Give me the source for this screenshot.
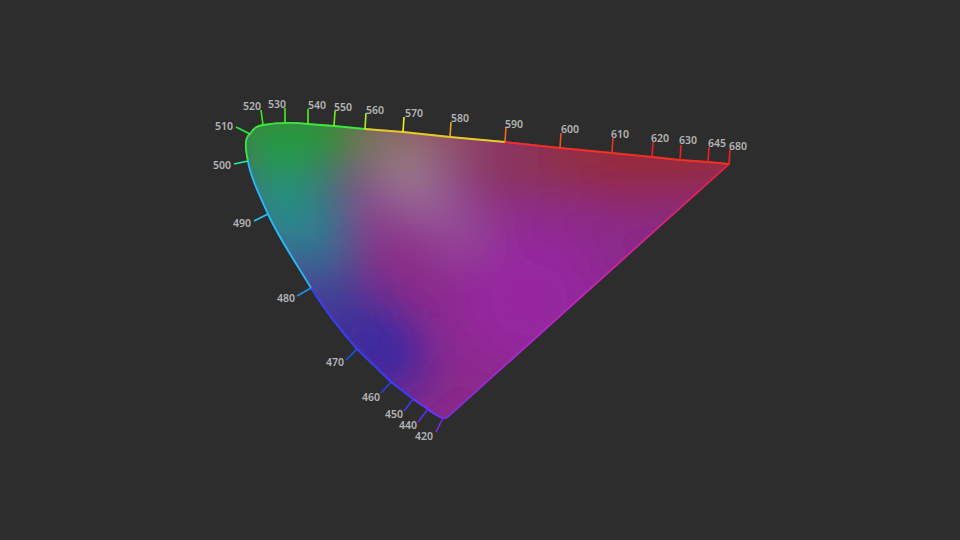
const pts: [string, number, number, number, number, string, number, number][] = [
  // label, x, y, tickX, tickY, color, labelX, labelY
  ['420', 443, 418, 436, 432, '#7a2cf0', 424, 437],
  ['440', 428, 409, 418, 422, '#5a30f0', 408, 426],
  ['450', 413, 399, 404, 411, '#4038f0', 394, 415],
  ['460', 391, 382, 381, 393, '#2a40f0', 371, 398],
  ['470', 357, 349, 346, 360, '#2050f0', 335, 363],
  ['480', 311, 288, 297, 296, '#2090f0', 286, 299],
  ['490', 268, 214, 254, 221, '#20c8f0', 242, 224],
  ['500', 248, 161, 234, 164, '#20f0a0', 222, 166],
  ['510', 250, 134, 236, 127, '#20f040', 224, 127],
  ['520', 263, 125, 261, 110, '#30f020', 252, 107],
  ['530', 285, 123, 285, 108, '#40f020', 277, 105],
  ['540', 308, 124, 308, 109, '#50f020', 317, 106],
  ['550', 334, 126, 335, 111, '#70f020', 343, 108],
  ['560', 365, 129, 366, 113, '#a8f020', 375, 111],
  ['570', 403, 132, 404, 117, '#f0f020', 414, 114],
  ['580', 450, 137, 451, 122, '#f0a020', 460, 119],
  ['590', 505, 142, 506, 127, '#f07020', 514, 125],
  ['600', 560, 148, 561, 133, '#f05020', 570, 130],
  ['610', 612, 153, 613, 138, '#f03020', 620, 135],
  ['620', 652, 157, 653, 142, '#f02020', 660, 139],
  ['630', 680, 160, 681, 145, '#f02020', 688, 141],
  ['645', 708, 162, 709, 147, '#f02020', 717, 144],
  ['680', 729, 164, 730, 149, '#f02020', 738, 147],
];

const outline =
  'M443,418 C436,415 430,411 428,409 L413,399 L391,382 L357,349 C340,330 325,310 311,288 C298,266 280,240 268,214 C258,192 250,175 248,161 C245,148 245,137 250,134 C254,127 258,126 263,125 C275,123 290,122 308,124 L334,126 L365,129 L403,132 L450,137 L505,142 L560,148 L612,153 L652,157 L680,160 L708,162 L729,164 L450,415 C447,418 445,419 443,418 Z';

export default function App() {
  return (
    <div className="w-[960px] h-[540px] bg-[#2d2d2d] overflow-hidden font-['Open_Sans','Noto_Sans',sans-serif]">
      <svg width="960" height="540" viewBox="0 0 960 540">
        <defs>
          <clipPath id="loc"><path d={outline} /></clipPath>
          <filter id="blur"><feGaussianBlur stdDeviation="28" /></filter>
          <linearGradient id="bottom" x1="443" y1="418" x2="729" y2="164" gradientUnits="userSpaceOnUse">
            <stop offset="0" stopColor="#8030f0" />
            <stop offset="0.5" stopColor="#d020c0" />
            <stop offset="1" stopColor="#f02040" />
          </linearGradient>
        </defs>
        <g clipPath="url(#loc)">
          <rect x="200" y="100" width="560" height="340" fill="#8a2a88" />
          <g filter="url(#blur)">
            <rect x="540" y="110" width="220" height="80" fill="#962a32" />
            <rect x="470" y="140" width="100" height="50" fill="#8a3848" />
            <circle cx="530" cy="300" r="75" fill="#9628a0" />
            <rect x="220" y="90" width="140" height="80" fill="#20a020" />
            <circle cx="280" cy="170" r="40" fill="#209a50" />
            <circle cx="395" cy="135" r="25" fill="#8a9a30" />
            <circle cx="450" cy="130" r="22" fill="#9a7830" />
            <rect x="230" y="190" width="120" height="70" fill="#208c90" />
            <circle cx="320" cy="290" r="30" fill="#204a98" />
            <circle cx="385" cy="355" r="40" fill="#2828a8" />
            <circle cx="345" cy="325" r="30" fill="#2830a0" />
            <circle cx="410" cy="185" r="30" fill="#a0989a" />
            <circle cx="455" cy="225" r="22" fill="#a070a8" />
          </g>
        </g>
        <path d={outline} fill="none" stroke="url(#bottom)" strokeWidth="1.6" />
        <path d="M248,161 C245,148 245,137 250,134 C254,127 258,126 263,125 C275,123 290,122 308,124 L334,126 L365,129" fill="none" stroke="#30f030" strokeWidth="1.8" />
        <path d="M365,129 L403,132 L450,137 L505,142" fill="none" stroke="#e0d020" strokeWidth="1.8" />
        <path d="M505,142 L560,148 L612,153 L652,157 L680,160 L708,162 L729,164" fill="none" stroke="#f03020" strokeWidth="1.8" />
        <path d="M311,288 C298,266 280,240 268,214 C258,192 250,175 248,161" fill="none" stroke="#20c0f0" strokeWidth="1.8" />
        <path d="M443,418 C436,415 430,411 428,409 L413,399 L391,382 L357,349 C340,330 325,310 311,288" fill="none" stroke="#3040f0" strokeWidth="1.8" />
        <path d="M443,418 C436,415 430,411 428,409 L413,399" fill="none" stroke="#7030f0" strokeWidth="1.8" />
        {pts.map((p) => (
          <g key={p[0]}>
            <line x1={p[1]} y1={p[2]} x2={p[3]} y2={p[4]} stroke={p[5]} strokeWidth="1.6" />
            <text x={p[6]} y={p[7]} fill="#b4b4b4" fontSize="10.5" fontWeight="600" textAnchor="middle" dominantBaseline="middle">{p[0]}</text>
          </g>
        ))}
      </svg>
    </div>
  );
}
